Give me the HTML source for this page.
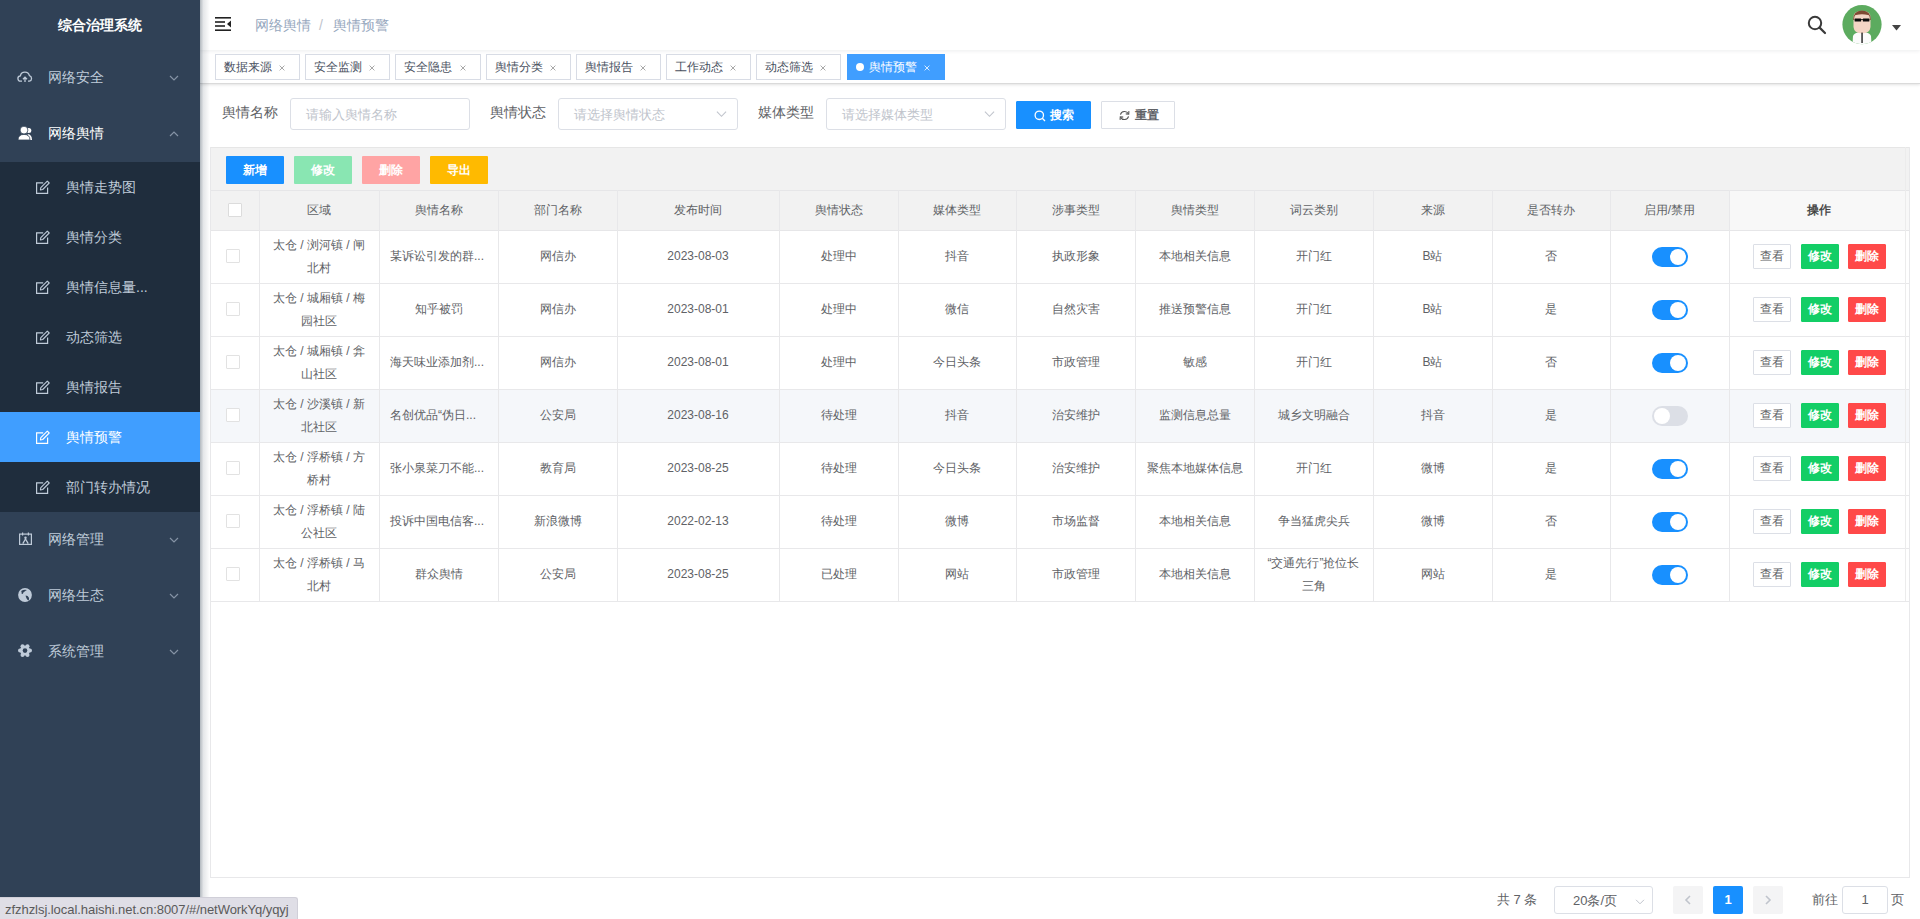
<!DOCTYPE html>
<html><head><meta charset="utf-8">
<style>
*{box-sizing:border-box;margin:0;padding:0}
html,body{width:1920px;height:919px;overflow:hidden;background:#fff;font-family:"Liberation Sans",sans-serif;-webkit-font-smoothing:antialiased}
.abs{position:absolute}
#sb{position:absolute;left:0;top:0;width:200px;height:919px;background:#304156;z-index:5}
#sbshadow{position:absolute;left:200px;top:0;width:10px;height:919px;background:linear-gradient(to right,rgba(0,21,41,.30),rgba(0,21,41,.10) 35%,rgba(0,21,41,0));z-index:4}
.logo{position:absolute;left:0;top:0;width:200px;height:50px;line-height:50px;text-align:center;color:#fff;font-weight:bold;font-size:14px}
.mi{position:absolute;left:0;width:200px;height:56px;line-height:56px;color:#bfcbd9;font-size:14px}
.mi .t{position:absolute;left:48px;top:-1px}
.mi .ic{position:absolute;left:18px;top:21px;width:14px;height:14px}
.mi .ar{position:absolute;left:169px;top:24px;width:10px;height:8px}
.sub{position:absolute;left:0;top:162px;width:200px;height:350px;background:#1f2d3d}
.si{position:absolute;left:0;width:200px;height:50px;line-height:50px;color:#bfcbd9;font-size:14px}
.si .t{position:absolute;left:66px;top:0}
.si .ic{position:absolute;left:36px;top:18px;width:14px;height:14px}
.si.on{background:#409eff;color:#fff}
#nav{position:absolute;left:200px;top:0;width:1720px;height:50px;background:#fff;box-shadow:0 1px 4px rgba(0,21,41,.08);z-index:3}
#tags{position:absolute;left:200px;top:50px;width:1720px;height:34px;background:#fff;border-bottom:1px solid #dadada;box-shadow:0 1px 3px 0 rgba(0,0,0,.10),0 0 3px 0 rgba(0,0,0,.04);z-index:2}
.tag{position:absolute;top:4px;height:26px;line-height:24px;border:1px solid #d8dce5;color:#495060;background:#fff;font-size:12px;padding-left:8px}
.tag .x{position:absolute;right:14px;top:10px;width:6px;height:6px;color:#a8a8a8}
.tag.on{background:#409eff;border-color:#409eff;color:#fff}
.tag.on .x{color:#d8ecff}
.tag.on .dot{display:inline-block;width:8px;height:8px;border-radius:50%;background:#fff;margin-right:5px;vertical-align:0px}

#main .lbl{position:absolute;top:96px;line-height:32px;font-size:14px;color:#606266}
#main .inp{position:absolute;top:98px;width:180px;height:32px;border:1px solid #dcdfe6;border-radius:3px;background:#fff}
#main .inp .ph{position:absolute;left:15px;top:1px;line-height:30px;font-size:13px;color:#c0c4cc}
#main .inp .sel{position:absolute;left:157px;top:11px;width:11px;height:8px}
#main .sbtn{position:absolute;top:101px;height:28px;line-height:26px;border:1px solid;border-radius:1px;font-size:12px;font-weight:bold}
#tw{position:absolute;left:210px;top:147px;width:1699px;height:43px;background:#f2f2f2;border-top:1px solid #e6e6e6}
#tw .tb{position:absolute;top:8px;width:58px;height:28px;line-height:28px;text-align:center;color:#fff;font-size:12px;font-weight:bold;border-radius:1px}
#thead{position:absolute;left:210px;top:190px;width:1519px;height:41px;background:#f2f2f2;border-top:1px solid #e6e6e8;border-bottom:1px solid #e6e6e8}
#thop{position:absolute;left:1729px;top:190px;width:180px;height:41px;background:#f8f8f8;border-top:1px solid #e6e6e8;border-bottom:1px solid #e6e6e8}
#tbot{position:absolute;left:210px;top:147px;width:1700px;height:731px;border:1px solid #e8e8ea;border-top:none}
.vl{position:absolute;z-index:1;width:1px;background:#e8e8ea}
.hl{position:absolute;z-index:1;left:210px;width:1699px;height:1px;background:#e8e8ea}
.hov{position:absolute;left:210px;width:1699px;height:53px;background:#f5f7fa}
.hc{position:absolute;z-index:2;height:40px;line-height:40px;text-align:center;font-size:12px;color:#606266}
.hc.op{color:#3a3a3a;-webkit-text-stroke:0.35px #3a3a3a}
.td{position:absolute;z-index:2;text-align:center;font-size:12px;color:#606266;white-space:nowrap}
.cb{position:absolute;z-index:2;width:14px;height:14px;border:1px solid #dcdcdc;border-radius:1px;background:#fff}
.cb.sm{width:14px;height:14px;border-color:#e2e2e2}
.sw{position:absolute;z-index:2;width:36px;height:20px;border-radius:10px;background:#dcdfe6}
.sw i{position:absolute;left:2px;top:2px;width:16px;height:16px;border-radius:50%;background:#fff}
.sw.on{background:#1890ff}
.sw.on i{left:18px}
.bt{position:absolute;z-index:2;width:38px;height:25px;line-height:23px;text-align:center;font-size:12px;border:1px solid;border-radius:1px}
.bt.view{background:#fff;border-color:#dcdfe6;color:#606266}
.bt.edit{background:#13ce66;border-color:#13ce66;color:#fff;font-weight:bold}
.bt.del{background:#ff4949;border-color:#ff4949;color:#fff;font-weight:bold}
.pg{position:absolute}
.pgsel{position:absolute;left:1554px;top:886px;width:99px;height:28px;border:1px solid #dcdfe6;border-radius:3px;font-size:13px;color:#606266;line-height:26px}
.pgsel span{position:absolute;left:18px;top:1px}
.pbtn{position:absolute;top:886px;width:30px;height:28px;line-height:28px;text-align:center;background:#f4f4f5;border-radius:2px;font-size:13px;font-weight:bold;color:#606266}
.pbtn.on{background:#1890ff;color:#fff}
.pginp{position:absolute;left:1842px;top:886px;width:46px;height:28px;border:1px solid #dcdfe6;border-radius:3px;text-align:center;line-height:26px;font-size:13px;color:#606266}
#status{position:absolute;left:0;top:897px;width:298px;height:22px;line-height:24px;padding-left:5px;background:#dfdee6;border:1px solid #d0cfd8;border-left:none;border-bottom:none;border-top-right-radius:3px;font-size:13px;color:#5a5a5a;letter-spacing:-0.05px;z-index:10;white-space:nowrap}
</style></head>
<body>
<div id="sb">
  <div class="logo">综合治理系统</div>
  <div class="mi" style="top:50px"><svg class="ic" style="left:17px;top:21px;width:16px;height:12px" viewBox="0 0 16 12"><path d="M5 10.2 H3.8 A2.7 2.7 0 0 1 3.4 4.8 A4.6 4.4 0 0 1 12.4 4.6 A2.9 2.9 0 0 1 12.4 10.2 H11" fill="none" stroke="#bfcbd9" stroke-width="1.3" stroke-linejoin="round"/><path d="M8 11 V6.4 M6 8.3 L8 6.2 L10 8.3" fill="none" stroke="#bfcbd9" stroke-width="1.3"/></svg><span class="t">网络安全</span><svg class="ar" viewBox="0 0 10 8"><path d="M1 2 L5 6 L9 2" fill="none" stroke="#8593a5" stroke-width="1.2"/></svg></div>
  <div class="mi" style="top:106px;color:#fff"><svg class="ic" style="left:18px;top:20px;width:14px;height:14px" viewBox="0 0 14 14"><path d="M9.5 8 Q14 8.6 14 14 H11 Z" fill="#fff"/><circle cx="10.8" cy="4.4" r="2.5" fill="#fff"/><circle cx="6" cy="4.1" r="3.9" fill="#fff" stroke="#304156" stroke-width="0.8"/><path d="M0 14 Q0 8.4 6 8.4 Q12 8.4 12 14 Z" fill="#fff" stroke="#304156" stroke-width="0.8"/></svg><span class="t">网络舆情</span><svg class="ar" viewBox="0 0 10 8"><path d="M1 6 L5 2 L9 6" fill="none" stroke="#8593a5" stroke-width="1.2"/></svg></div>
  <div class="sub">
    <div class="si" style="top:0"><svg class="ic" style="left:36px;top:18px;width:14px;height:14px" viewBox="0 0 14 14"><path d="M7.2 2.8 H0.6 V13.4 H11.6 V7.4" fill="none" stroke="#bfcbd9" stroke-width="1.2"/><path d="M4.4 10 L4.8 7.6 L11.3 1.1 L13.2 3 L6.7 9.5 Z" fill="none" stroke="#bfcbd9" stroke-width="1.1" stroke-linejoin="round"/></svg><span class="t">舆情走势图</span></div>
    <div class="si" style="top:50px"><svg class="ic" style="left:36px;top:18px;width:14px;height:14px" viewBox="0 0 14 14"><path d="M7.2 2.8 H0.6 V13.4 H11.6 V7.4" fill="none" stroke="#bfcbd9" stroke-width="1.2"/><path d="M4.4 10 L4.8 7.6 L11.3 1.1 L13.2 3 L6.7 9.5 Z" fill="none" stroke="#bfcbd9" stroke-width="1.1" stroke-linejoin="round"/></svg><span class="t">舆情分类</span></div>
    <div class="si" style="top:100px"><svg class="ic" style="left:36px;top:18px;width:14px;height:14px" viewBox="0 0 14 14"><path d="M7.2 2.8 H0.6 V13.4 H11.6 V7.4" fill="none" stroke="#bfcbd9" stroke-width="1.2"/><path d="M4.4 10 L4.8 7.6 L11.3 1.1 L13.2 3 L6.7 9.5 Z" fill="none" stroke="#bfcbd9" stroke-width="1.1" stroke-linejoin="round"/></svg><span class="t">舆情信息量...</span></div>
    <div class="si" style="top:150px"><svg class="ic" style="left:36px;top:18px;width:14px;height:14px" viewBox="0 0 14 14"><path d="M7.2 2.8 H0.6 V13.4 H11.6 V7.4" fill="none" stroke="#bfcbd9" stroke-width="1.2"/><path d="M4.4 10 L4.8 7.6 L11.3 1.1 L13.2 3 L6.7 9.5 Z" fill="none" stroke="#bfcbd9" stroke-width="1.1" stroke-linejoin="round"/></svg><span class="t">动态筛选</span></div>
    <div class="si" style="top:200px"><svg class="ic" style="left:36px;top:18px;width:14px;height:14px" viewBox="0 0 14 14"><path d="M7.2 2.8 H0.6 V13.4 H11.6 V7.4" fill="none" stroke="#bfcbd9" stroke-width="1.2"/><path d="M4.4 10 L4.8 7.6 L11.3 1.1 L13.2 3 L6.7 9.5 Z" fill="none" stroke="#bfcbd9" stroke-width="1.1" stroke-linejoin="round"/></svg><span class="t">舆情报告</span></div>
    <div class="si on" style="top:250px"><svg class="ic" style="left:36px;top:18px;width:14px;height:14px" viewBox="0 0 14 14"><path d="M7.2 2.8 H0.6 V13.4 H11.6 V7.4" fill="none" stroke="#fff" stroke-width="1.2"/><path d="M4.4 10 L4.8 7.6 L11.3 1.1 L13.2 3 L6.7 9.5 Z" fill="none" stroke="#fff" stroke-width="1.1" stroke-linejoin="round"/></svg><span class="t">舆情预警</span></div>
    <div class="si" style="top:300px"><svg class="ic" style="left:36px;top:18px;width:14px;height:14px" viewBox="0 0 14 14"><path d="M7.2 2.8 H0.6 V13.4 H11.6 V7.4" fill="none" stroke="#bfcbd9" stroke-width="1.2"/><path d="M4.4 10 L4.8 7.6 L11.3 1.1 L13.2 3 L6.7 9.5 Z" fill="none" stroke="#bfcbd9" stroke-width="1.1" stroke-linejoin="round"/></svg><span class="t">部门转办情况</span></div>
  </div>
  <div class="mi" style="top:512px"><svg class="ic" style="left:19px;top:20px;width:13px;height:13px" viewBox="0 0 13 13"><rect x="0.6" y="2.1" width="11.8" height="10.3" fill="none" stroke="#bfcbd9" stroke-width="1.2"/><path d="M3.6 0.6 V3.4 M9.4 0.6 V3.4" stroke="#bfcbd9" stroke-width="1.2"/><circle cx="6.5" cy="5.8" r="1.2" fill="#bfcbd9"/><path d="M3.8 11.6 L6.5 7 L9.2 11.6" fill="none" stroke="#bfcbd9" stroke-width="1.3"/></svg><span class="t">网络管理</span><svg class="ar" viewBox="0 0 10 8"><path d="M1 2 L5 6 L9 2" fill="none" stroke="#8593a5" stroke-width="1.2"/></svg></div>
  <div class="mi" style="top:568px"><svg class="ic" style="left:18px;top:20px;width:14px;height:14px" viewBox="0 0 14 14"><circle cx="7" cy="7" r="6.9" fill="#bfcbd9"/><path d="M3.2 3 Q5.8 1.2 9 2 Q7.2 2.8 6.8 3.6 Q5.6 3.6 5 5.6 Q4.2 6.4 3.6 5.4 Q3.8 4.2 3.2 3 Z" fill="#304156"/><path d="M7.6 7.6 Q10 7.8 10.8 9.6 Q11.4 11.4 10.6 12.4 Q9.2 11.8 8.6 10.4 Q7.8 9 7.6 7.6 Z" fill="#304156"/></svg><span class="t">网络生态</span><svg class="ar" viewBox="0 0 10 8"><path d="M1 2 L5 6 L9 2" fill="none" stroke="#8593a5" stroke-width="1.2"/></svg></div>
  <div class="mi" style="top:624px"><svg class="ic" style="left:18px;top:20px;width:14px;height:14px" viewBox="0 0 14 14"><circle cx="7" cy="6.6" r="5" fill="#bfcbd9"/><circle cx="12.00" cy="6.60" r="2" fill="#bfcbd9"/><circle cx="9.50" cy="10.93" r="2" fill="#bfcbd9"/><circle cx="4.50" cy="10.93" r="2" fill="#bfcbd9"/><circle cx="2.00" cy="6.60" r="2" fill="#bfcbd9"/><circle cx="4.50" cy="2.27" r="2" fill="#bfcbd9"/><circle cx="9.50" cy="2.27" r="2" fill="#bfcbd9"/><circle cx="7" cy="6.6" r="2.3" fill="#304156"/></svg><span class="t">系统管理</span><svg class="ar" viewBox="0 0 10 8"><path d="M1 2 L5 6 L9 2" fill="none" stroke="#8593a5" stroke-width="1.2"/></svg></div>
</div>
<div id="sbshadow"></div>

<div id="nav">
  <svg class="abs" style="left:15px;top:17px" width="16" height="14" viewBox="0 0 16 14">
    <rect x="0" y="0" width="16" height="1.6" fill="#222"/>
    <rect x="0" y="4.2" width="10" height="1.6" fill="#222"/>
    <rect x="0" y="8.2" width="10" height="1.6" fill="#222"/>
    <rect x="0" y="12.4" width="16" height="1.6" fill="#222"/>
    <path d="M16 3.6 L12 7 L16 10.4 Z" fill="#222"/>
  </svg>
  <div class="abs" style="left:55px;top:0;line-height:50px;font-size:14px;color:#97a8be">网络舆情</div>
  <div class="abs" style="left:119px;top:0;line-height:50px;font-size:14px;color:#c0c4cc">/</div>
  <div class="abs" style="left:133px;top:0;line-height:50px;font-size:14px;color:#97a8be">舆情预警</div>
  <svg class="abs" style="left:1607px;top:15px" width="20" height="20" viewBox="0 0 20 20">
    <circle cx="8" cy="8" r="6.2" fill="none" stroke="#3a3a3a" stroke-width="2"/>
    <path d="M12.6 12.6 L18 18" stroke="#3a3a3a" stroke-width="2.2" stroke-linecap="round"/>
  </svg>
  <svg class="abs" style="left:1642px;top:5px" width="40" height="40" viewBox="0 0 40 40">
    <defs><clipPath id="avc"><circle cx="20" cy="19.6" r="19.6"/></clipPath></defs>
    <g clip-path="url(#avc)">
      <rect width="40" height="40" fill="#5cab5f"/>
      <path d="M10.5 40 L11 31 Q12 28 16 27.5 L24 27.5 Q28 28 29 31 L29.5 40 Z" fill="#fbfbfb"/>
      <path d="M11.5 12 Q11.5 6 20 5.8 Q28.5 6 28.5 12 L28.5 22 Q28 28 20 28.5 Q12 28 11.5 22 Z" fill="#f4d5c5"/>
      <path d="M11.2 15 Q11 6 20 5.6 Q29 6 28.8 15 L27.8 15 Q28 10 26 10 Q20 8.6 14 10 Q12 10 12.2 15 Z" fill="#7e4a33"/>
      <rect x="12.6" y="13.6" width="6.6" height="2.9" rx="0.6" fill="#0c0c0c"/>
      <rect x="20.8" y="13.6" width="6.6" height="2.9" rx="0.6" fill="#0c0c0c"/>
      <rect x="19" y="14" width="2" height="0.9" fill="#222"/>
      <rect x="19.4" y="27.6" width="1.3" height="10.4" fill="#111"/>
    </g>
  </svg>
  <svg class="abs" style="left:1692px;top:25px" width="9" height="6" viewBox="0 0 9 6"><path d="M0 0 L9 0 L4.5 5.5 Z" fill="#444"/></svg>
</div>
<div id="tags">
  <div class="tag" style="left:15px;width:85px">数据来源<svg class="x" viewBox="0 0 6 6"><path d="M0.6 0.6 L5.4 5.4 M5.4 0.6 L0.6 5.4" stroke="currentColor" stroke-width="1"/></svg></div>
  <div class="tag" style="left:105px;width:85px">安全监测<svg class="x" viewBox="0 0 6 6"><path d="M0.6 0.6 L5.4 5.4 M5.4 0.6 L0.6 5.4" stroke="currentColor" stroke-width="1"/></svg></div>
  <div class="tag" style="left:195px;width:86px">安全隐患<svg class="x" viewBox="0 0 6 6"><path d="M0.6 0.6 L5.4 5.4 M5.4 0.6 L0.6 5.4" stroke="currentColor" stroke-width="1"/></svg></div>
  <div class="tag" style="left:286px;width:85px">舆情分类<svg class="x" viewBox="0 0 6 6"><path d="M0.6 0.6 L5.4 5.4 M5.4 0.6 L0.6 5.4" stroke="currentColor" stroke-width="1"/></svg></div>
  <div class="tag" style="left:376px;width:85px">舆情报告<svg class="x" viewBox="0 0 6 6"><path d="M0.6 0.6 L5.4 5.4 M5.4 0.6 L0.6 5.4" stroke="currentColor" stroke-width="1"/></svg></div>
  <div class="tag" style="left:466px;width:85px">工作动态<svg class="x" viewBox="0 0 6 6"><path d="M0.6 0.6 L5.4 5.4 M5.4 0.6 L0.6 5.4" stroke="currentColor" stroke-width="1"/></svg></div>
  <div class="tag" style="left:556px;width:85px">动态筛选<svg class="x" viewBox="0 0 6 6"><path d="M0.6 0.6 L5.4 5.4 M5.4 0.6 L0.6 5.4" stroke="currentColor" stroke-width="1"/></svg></div>
  <div class="tag on" style="left:647px;width:98px"><span class="dot"></span>舆情预警<svg class="x" viewBox="0 0 6 6"><path d="M0.6 0.6 L5.4 5.4 M5.4 0.6 L0.6 5.4" stroke="currentColor" stroke-width="1"/></svg></div>
</div>

<div id="main">
  <div class="lbl" style="left:222px">舆情名称</div>
  <div class="inp" style="left:290px"><span class="ph">请输入舆情名称</span></div>
  <div class="lbl" style="left:490px">舆情状态</div>
  <div class="inp" style="left:558px"><span class="ph">请选择舆情状态</span><svg class="sel" viewBox="0 0 12 8"><path d="M1 1.5 L6 6.5 L11 1.5" fill="none" stroke="#c0c4cc" stroke-width="1.2"/></svg></div>
  <div class="lbl" style="left:758px">媒体类型</div>
  <div class="inp" style="left:826px"><span class="ph">请选择媒体类型</span><svg class="sel" viewBox="0 0 12 8"><path d="M1 1.5 L6 6.5 L11 1.5" fill="none" stroke="#c0c4cc" stroke-width="1.2"/></svg></div>
  <div class="sbtn" style="left:1016px;width:75px;background:#1890ff;border-color:#1890ff;color:#fff">
    <svg class="abs" style="left:17px;top:8px" width="12" height="12" viewBox="0 0 12 12"><circle cx="5.3" cy="5.3" r="4.2" fill="none" stroke="#fff" stroke-width="1.3"/><path d="M8.3 8.3 L11 11" stroke="#fff" stroke-width="1.3"/></svg>
    <span class="abs" style="left:33px;top:0">搜索</span></div>
  <div class="sbtn" style="left:1101px;width:74px;background:#fff;border-color:#dcdfe6;color:#606266">
    <svg class="abs" style="left:17px;top:8px" width="11" height="11" viewBox="0 0 12 12"><path d="M10.2 4.2 A4.6 4.6 0 0 0 1.6 5" fill="none" stroke="#555" stroke-width="1.2"/><path d="M1.8 7.8 A4.6 4.6 0 0 0 10.4 7" fill="none" stroke="#555" stroke-width="1.2"/><path d="M10.8 1.2 L10.6 4.6 L7.4 4.2" fill="none" stroke="#555" stroke-width="1.2"/><path d="M1.2 10.8 L1.4 7.4 L4.6 7.8" fill="none" stroke="#555" stroke-width="1.2"/></svg>
    <span class="abs" style="left:33px;top:0">重置</span></div>

  <div id="tw">
    <div class="tb" style="left:16px;background:#1890ff">新增</div>
    <div class="tb" style="left:84px;background:#89e6b2">修改</div>
    <div class="tb" style="left:152px;background:#ffa4a4">删除</div>
    <div class="tb" style="left:220px;background:#ffba00">导出</div>
  </div>
  <div id="thead"></div>
  <div id="thop"></div>
  <div id="opshadow"></div>
<div class="vl" style="left:259px;top:190px;height:411px"></div>
<div class="vl" style="left:379px;top:190px;height:411px"></div>
<div class="vl" style="left:498px;top:190px;height:411px"></div>
<div class="vl" style="left:617px;top:190px;height:411px"></div>
<div class="vl" style="left:779px;top:190px;height:411px"></div>
<div class="vl" style="left:898px;top:190px;height:411px"></div>
<div class="vl" style="left:1016px;top:190px;height:411px"></div>
<div class="vl" style="left:1135px;top:190px;height:411px"></div>
<div class="vl" style="left:1254px;top:190px;height:411px"></div>
<div class="vl" style="left:1373px;top:190px;height:411px"></div>
<div class="vl" style="left:1492px;top:190px;height:411px"></div>
<div class="vl" style="left:1610px;top:190px;height:411px"></div>
<div class="vl" style="left:1729px;top:190px;height:411px"></div>
<div class="cb" style="left:228px;top:203px"></div>
<div class="hc" style="left:259px;width:120px;top:190px">区域</div>
<div class="hc" style="left:379px;width:119px;top:190px">舆情名称</div>
<div class="hc" style="left:498px;width:119px;top:190px">部门名称</div>
<div class="hc" style="left:617px;width:162px;top:190px">发布时间</div>
<div class="hc" style="left:779px;width:119px;top:190px">舆情状态</div>
<div class="hc" style="left:898px;width:118px;top:190px">媒体类型</div>
<div class="hc" style="left:1016px;width:119px;top:190px">涉事类型</div>
<div class="hc" style="left:1135px;width:119px;top:190px">舆情类型</div>
<div class="hc" style="left:1254px;width:119px;top:190px">词云类别</div>
<div class="hc" style="left:1373px;width:119px;top:190px">来源</div>
<div class="hc" style="left:1492px;width:118px;top:190px">是否转办</div>
<div class="hc" style="left:1610px;width:119px;top:190px">启用/禁用</div>
<div class="hc op" style="left:1729px;width:180px;top:190px">操作</div>
<div class="hl" style="top:283px"></div>
<div class="cb sm" style="left:226px;top:249px"></div>
<div class="td" style="left:259px;width:120px;top:234px;line-height:23px">太仓 / 浏河镇 / 闸<br>北村</div>
<div class="td" style="left:390px;width:108px;top:230px;line-height:53px;text-align:left">某诉讼引发的群...</div>
<div class="td" style="left:498px;width:119px;top:230px;line-height:53px">网信办</div>
<div class="td" style="left:617px;width:162px;top:230px;line-height:53px">2023-08-03</div>
<div class="td" style="left:779px;width:119px;top:230px;line-height:53px">处理中</div>
<div class="td" style="left:898px;width:118px;top:230px;line-height:53px">抖音</div>
<div class="td" style="left:1016px;width:119px;top:230px;line-height:53px">执政形象</div>
<div class="td" style="left:1135px;width:119px;top:230px;line-height:53px">本地相关信息</div>
<div class="td" style="left:1254px;width:119px;top:230px;line-height:53px">开门红</div>
<div class="td" style="left:1373px;width:119px;top:230px;line-height:53px">B站</div>
<div class="td" style="left:1492px;width:118px;top:230px;line-height:53px">否</div>
<div class="sw on" style="left:1652px;top:247px"><i></i></div>
<div class="bt view" style="left:1753px;top:244px">查看</div>
<div class="bt edit" style="left:1801px;top:244px">修改</div>
<div class="bt del" style="left:1848px;top:244px">删除</div>
<div class="hl" style="top:336px"></div>
<div class="cb sm" style="left:226px;top:302px"></div>
<div class="td" style="left:259px;width:120px;top:287px;line-height:23px">太仓 / 城厢镇 / 梅<br>园社区</div>
<div class="td" style="left:379px;width:119px;top:283px;line-height:53px">知乎被罚</div>
<div class="td" style="left:498px;width:119px;top:283px;line-height:53px">网信办</div>
<div class="td" style="left:617px;width:162px;top:283px;line-height:53px">2023-08-01</div>
<div class="td" style="left:779px;width:119px;top:283px;line-height:53px">处理中</div>
<div class="td" style="left:898px;width:118px;top:283px;line-height:53px">微信</div>
<div class="td" style="left:1016px;width:119px;top:283px;line-height:53px">自然灾害</div>
<div class="td" style="left:1135px;width:119px;top:283px;line-height:53px">推送预警信息</div>
<div class="td" style="left:1254px;width:119px;top:283px;line-height:53px">开门红</div>
<div class="td" style="left:1373px;width:119px;top:283px;line-height:53px">B站</div>
<div class="td" style="left:1492px;width:118px;top:283px;line-height:53px">是</div>
<div class="sw on" style="left:1652px;top:300px"><i></i></div>
<div class="bt view" style="left:1753px;top:297px">查看</div>
<div class="bt edit" style="left:1801px;top:297px">修改</div>
<div class="bt del" style="left:1848px;top:297px">删除</div>
<div class="hl" style="top:389px"></div>
<div class="cb sm" style="left:226px;top:355px"></div>
<div class="td" style="left:259px;width:120px;top:340px;line-height:23px">太仓 / 城厢镇 / 弇<br>山社区</div>
<div class="td" style="left:390px;width:108px;top:336px;line-height:53px;text-align:left">海天味业添加剂...</div>
<div class="td" style="left:498px;width:119px;top:336px;line-height:53px">网信办</div>
<div class="td" style="left:617px;width:162px;top:336px;line-height:53px">2023-08-01</div>
<div class="td" style="left:779px;width:119px;top:336px;line-height:53px">处理中</div>
<div class="td" style="left:898px;width:118px;top:336px;line-height:53px">今日头条</div>
<div class="td" style="left:1016px;width:119px;top:336px;line-height:53px">市政管理</div>
<div class="td" style="left:1135px;width:119px;top:336px;line-height:53px">敏感</div>
<div class="td" style="left:1254px;width:119px;top:336px;line-height:53px">开门红</div>
<div class="td" style="left:1373px;width:119px;top:336px;line-height:53px">B站</div>
<div class="td" style="left:1492px;width:118px;top:336px;line-height:53px">否</div>
<div class="sw on" style="left:1652px;top:353px"><i></i></div>
<div class="bt view" style="left:1753px;top:350px">查看</div>
<div class="bt edit" style="left:1801px;top:350px">修改</div>
<div class="bt del" style="left:1848px;top:350px">删除</div>
<div class="hov" style="top:389px"></div>
<div class="hl" style="top:442px"></div>
<div class="cb sm" style="left:226px;top:408px"></div>
<div class="td" style="left:259px;width:120px;top:393px;line-height:23px">太仓 / 沙溪镇 / 新<br>北社区</div>
<div class="td" style="left:390px;width:108px;top:389px;line-height:53px;text-align:left">名创优品“伪日...</div>
<div class="td" style="left:498px;width:119px;top:389px;line-height:53px">公安局</div>
<div class="td" style="left:617px;width:162px;top:389px;line-height:53px">2023-08-16</div>
<div class="td" style="left:779px;width:119px;top:389px;line-height:53px">待处理</div>
<div class="td" style="left:898px;width:118px;top:389px;line-height:53px">抖音</div>
<div class="td" style="left:1016px;width:119px;top:389px;line-height:53px">治安维护</div>
<div class="td" style="left:1135px;width:119px;top:389px;line-height:53px">监测信息总量</div>
<div class="td" style="left:1254px;width:119px;top:389px;line-height:53px">城乡文明融合</div>
<div class="td" style="left:1373px;width:119px;top:389px;line-height:53px">抖音</div>
<div class="td" style="left:1492px;width:118px;top:389px;line-height:53px">是</div>
<div class="sw" style="left:1652px;top:406px"><i></i></div>
<div class="bt view" style="left:1753px;top:403px">查看</div>
<div class="bt edit" style="left:1801px;top:403px">修改</div>
<div class="bt del" style="left:1848px;top:403px">删除</div>
<div class="hl" style="top:495px"></div>
<div class="cb sm" style="left:226px;top:461px"></div>
<div class="td" style="left:259px;width:120px;top:446px;line-height:23px">太仓 / 浮桥镇 / 方<br>桥村</div>
<div class="td" style="left:390px;width:108px;top:442px;line-height:53px;text-align:left">张小泉菜刀不能...</div>
<div class="td" style="left:498px;width:119px;top:442px;line-height:53px">教育局</div>
<div class="td" style="left:617px;width:162px;top:442px;line-height:53px">2023-08-25</div>
<div class="td" style="left:779px;width:119px;top:442px;line-height:53px">待处理</div>
<div class="td" style="left:898px;width:118px;top:442px;line-height:53px">今日头条</div>
<div class="td" style="left:1016px;width:119px;top:442px;line-height:53px">治安维护</div>
<div class="td" style="left:1135px;width:119px;top:442px;line-height:53px">聚焦本地媒体信息</div>
<div class="td" style="left:1254px;width:119px;top:442px;line-height:53px">开门红</div>
<div class="td" style="left:1373px;width:119px;top:442px;line-height:53px">微博</div>
<div class="td" style="left:1492px;width:118px;top:442px;line-height:53px">是</div>
<div class="sw on" style="left:1652px;top:459px"><i></i></div>
<div class="bt view" style="left:1753px;top:456px">查看</div>
<div class="bt edit" style="left:1801px;top:456px">修改</div>
<div class="bt del" style="left:1848px;top:456px">删除</div>
<div class="hl" style="top:548px"></div>
<div class="cb sm" style="left:226px;top:514px"></div>
<div class="td" style="left:259px;width:120px;top:499px;line-height:23px">太仓 / 浮桥镇 / 陆<br>公社区</div>
<div class="td" style="left:390px;width:108px;top:495px;line-height:53px;text-align:left">投诉中国电信客...</div>
<div class="td" style="left:498px;width:119px;top:495px;line-height:53px">新浪微博</div>
<div class="td" style="left:617px;width:162px;top:495px;line-height:53px">2022-02-13</div>
<div class="td" style="left:779px;width:119px;top:495px;line-height:53px">待处理</div>
<div class="td" style="left:898px;width:118px;top:495px;line-height:53px">微博</div>
<div class="td" style="left:1016px;width:119px;top:495px;line-height:53px">市场监督</div>
<div class="td" style="left:1135px;width:119px;top:495px;line-height:53px">本地相关信息</div>
<div class="td" style="left:1254px;width:119px;top:495px;line-height:53px">争当猛虎尖兵</div>
<div class="td" style="left:1373px;width:119px;top:495px;line-height:53px">微博</div>
<div class="td" style="left:1492px;width:118px;top:495px;line-height:53px">否</div>
<div class="sw on" style="left:1652px;top:512px"><i></i></div>
<div class="bt view" style="left:1753px;top:509px">查看</div>
<div class="bt edit" style="left:1801px;top:509px">修改</div>
<div class="bt del" style="left:1848px;top:509px">删除</div>
<div class="hl" style="top:601px"></div>
<div class="cb sm" style="left:226px;top:567px"></div>
<div class="td" style="left:259px;width:120px;top:552px;line-height:23px">太仓 / 浮桥镇 / 马<br>北村</div>
<div class="td" style="left:379px;width:119px;top:548px;line-height:53px">群众舆情</div>
<div class="td" style="left:498px;width:119px;top:548px;line-height:53px">公安局</div>
<div class="td" style="left:617px;width:162px;top:548px;line-height:53px">2023-08-25</div>
<div class="td" style="left:779px;width:119px;top:548px;line-height:53px">已处理</div>
<div class="td" style="left:898px;width:118px;top:548px;line-height:53px">网站</div>
<div class="td" style="left:1016px;width:119px;top:548px;line-height:53px">市政管理</div>
<div class="td" style="left:1135px;width:119px;top:548px;line-height:53px">本地相关信息</div>
<div class="td" style="left:1254px;width:119px;top:552px;line-height:23px">“交通先行”抢位长<br>三角</div>
<div class="td" style="left:1373px;width:119px;top:548px;line-height:53px">网站</div>
<div class="td" style="left:1492px;width:118px;top:548px;line-height:53px">是</div>
<div class="sw on" style="left:1652px;top:565px"><i></i></div>
<div class="bt view" style="left:1753px;top:562px">查看</div>
<div class="bt edit" style="left:1801px;top:562px">修改</div>
<div class="bt del" style="left:1848px;top:562px">删除</div>
  <div id="tbot"></div>
  <div class="vl" style="left:1905px;top:147px;height:454px;background:#ececec"></div>

  <div class="pg" style="left:1497px;top:886px;line-height:28px;font-size:13px;color:#606266">共 7 条</div>
  <div class="pgsel"><span>20条/页</span><svg class="abs" style="left:80px;top:12px" width="10" height="6" viewBox="0 0 10 6"><path d="M1 0.8 L5 4.8 L9 0.8" fill="none" stroke="#c0c4cc" stroke-width="1"/></svg></div>
  <div class="pbtn" style="left:1673px"><svg class="abs" style="left:11px;top:9px" width="8" height="10" viewBox="0 0 8 10"><path d="M6 1 L2 5 L6 9" fill="none" stroke="#c0c4cc" stroke-width="1.6"/></svg></div>
  <div class="pbtn on" style="left:1713px">1</div>
  <div class="pbtn" style="left:1753px"><svg class="abs" style="left:11px;top:9px" width="8" height="10" viewBox="0 0 8 10"><path d="M2 1 L6 5 L2 9" fill="none" stroke="#c0c4cc" stroke-width="1.6"/></svg></div>
  <div class="pg" style="left:1812px;top:886px;line-height:28px;font-size:13px;color:#606266">前往</div>
  <div class="pginp">1</div>
  <div class="pg" style="left:1891px;top:886px;line-height:28px;font-size:13px;color:#606266">页</div>
</div>
<div id="status">zfzhzlsj.local.haishi.net.cn:8007/#/netWorkYq/yqyj</div>

</body></html>
